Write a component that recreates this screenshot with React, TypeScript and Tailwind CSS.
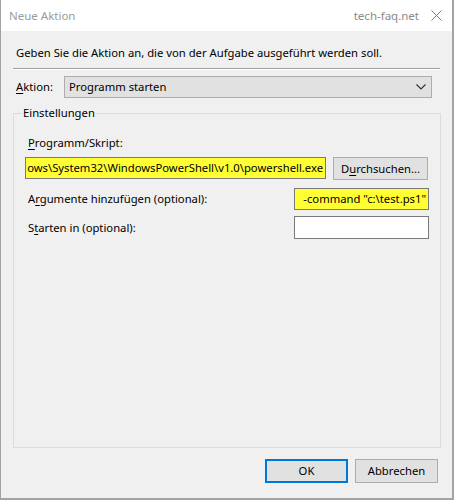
import React from 'react';

const font = { fontFamily: '"Noto Sans", "Open Sans", sans-serif' };

const U = ({ children }: { children: React.ReactNode }) => <span className="underline underline-offset-2">{children}</span>;

const Field = ({ value, yellow, className }: { value?: string; yellow?: boolean; className: string }) => (
  <div
    className={`flex h-[22px] items-center justify-end overflow-hidden whitespace-nowrap border border-[#7a7a7a] px-[2px] text-black ${
      yellow ? 'bg-[#ffff33]' : 'bg-white'
    } ${className}`}
  >
    {value}
  </div>
);

const Button = ({ children, primary, className }: { children: React.ReactNode; primary?: boolean; className: string }) => (
  <div
    className={`flex items-center justify-center bg-[#e1e1e1] text-black ${
      primary ? 'border-2 border-[#0078d7]' : 'border border-[#adadad]'
    } ${className}`}
  >
    {children}
  </div>
);

export default function App() {
  return (
    <div style={font} className="flex h-[500px] w-[454px] flex-col border-b-2 border-l border-r-2 border-[#a3a3a3] bg-[#f0f0f0] text-[11.25px] leading-4 text-black">
      <div className="flex h-[31px] shrink-0 items-center justify-between bg-white pl-[8px] pr-[10px] text-[#9b9b9b]">
        <span className="text-[11.5px]">Neue Aktion</span>
        <div className="flex items-center gap-[12px]">
          <span className="text-[11.5px] text-[#8a8a8a]">tech-faq.net</span>
          <svg width="11" height="11" viewBox="0 0 11 11" className="text-[#7a7a7a]">
            <path d="M0.5 0.5 L10.5 10.5 M10.5 0.5 L0.5 10.5" stroke="currentColor" strokeWidth="1" fill="none" />
          </svg>
        </div>
      </div>

      <div className="flex flex-1 flex-col px-[12px]">
        <p className="mt-[14px] pl-[3px]">Geben Sie die Aktion an, die von der Aufgabe ausgeführt werden soll.</p>
        <div className="mt-[7px] w-[427px] border-b border-t border-b-white border-t-[#a0a0a0]" />

        <div className="mt-[6px] flex items-center">
          <span className="w-[51px] pl-[3px]">
            <U>A</U>ktion:
          </span>
          <div className="flex h-[22px] w-[368px] items-center justify-between border border-[#adadad] bg-[#e1e1e1] pl-[4px] pr-[5px]">
            <span>Programm starten</span>
            <svg width="10" height="6" viewBox="0 0 10 6">
              <path d="M0.5 0.5 L5 5 L9.5 0.5" stroke="#333" strokeWidth="1.2" fill="none" />
            </svg>
          </div>
        </div>

        <div className="relative mt-[15px] flex h-[335px] w-[428px] flex-col border border-[#dcdcdc] px-[11px]">
          <span className="absolute -top-[9px] left-[8px] bg-[#f0f0f0] px-[1px]">Einstellungen</span>
          <span className="mt-[21px] pl-[3px]">
            <U>P</U>rogramm/Skript:
          </span>
          <div className="mt-[6px] flex items-start gap-[7px]">
            <Field value="ows\System32\WindowsPowerShell\v1.0\powershell.exe" yellow className="w-[301px]" />
            <Button className="h-[23px] w-[95px]">
              D<U>u</U>rchsuchen...
            </Button>
          </div>
          <div className="mt-[8px] flex items-center justify-between">
            <span className="pl-[3px]">
              A<U>r</U>gumente hinzufügen (optional):
            </span>
            <Field value={'-command "c:\\test.ps1"'} yellow className="w-[135px]" />
          </div>
          <div className="mt-[6px] flex items-center justify-between">
            <span className="pl-[3px]">
              S<U>t</U>arten in (optional):
            </span>
            <Field className="h-[23px] w-[135px]" />
          </div>
        </div>

        <div className="mt-[11px] flex justify-end gap-[7px] pr-[2px]">
          <Button primary className="h-[24px] w-[83px]">
            OK
          </Button>
          <Button className="h-[24px] w-[83px]">Abbrechen</Button>
        </div>
      </div>
    </div>
  );
}
